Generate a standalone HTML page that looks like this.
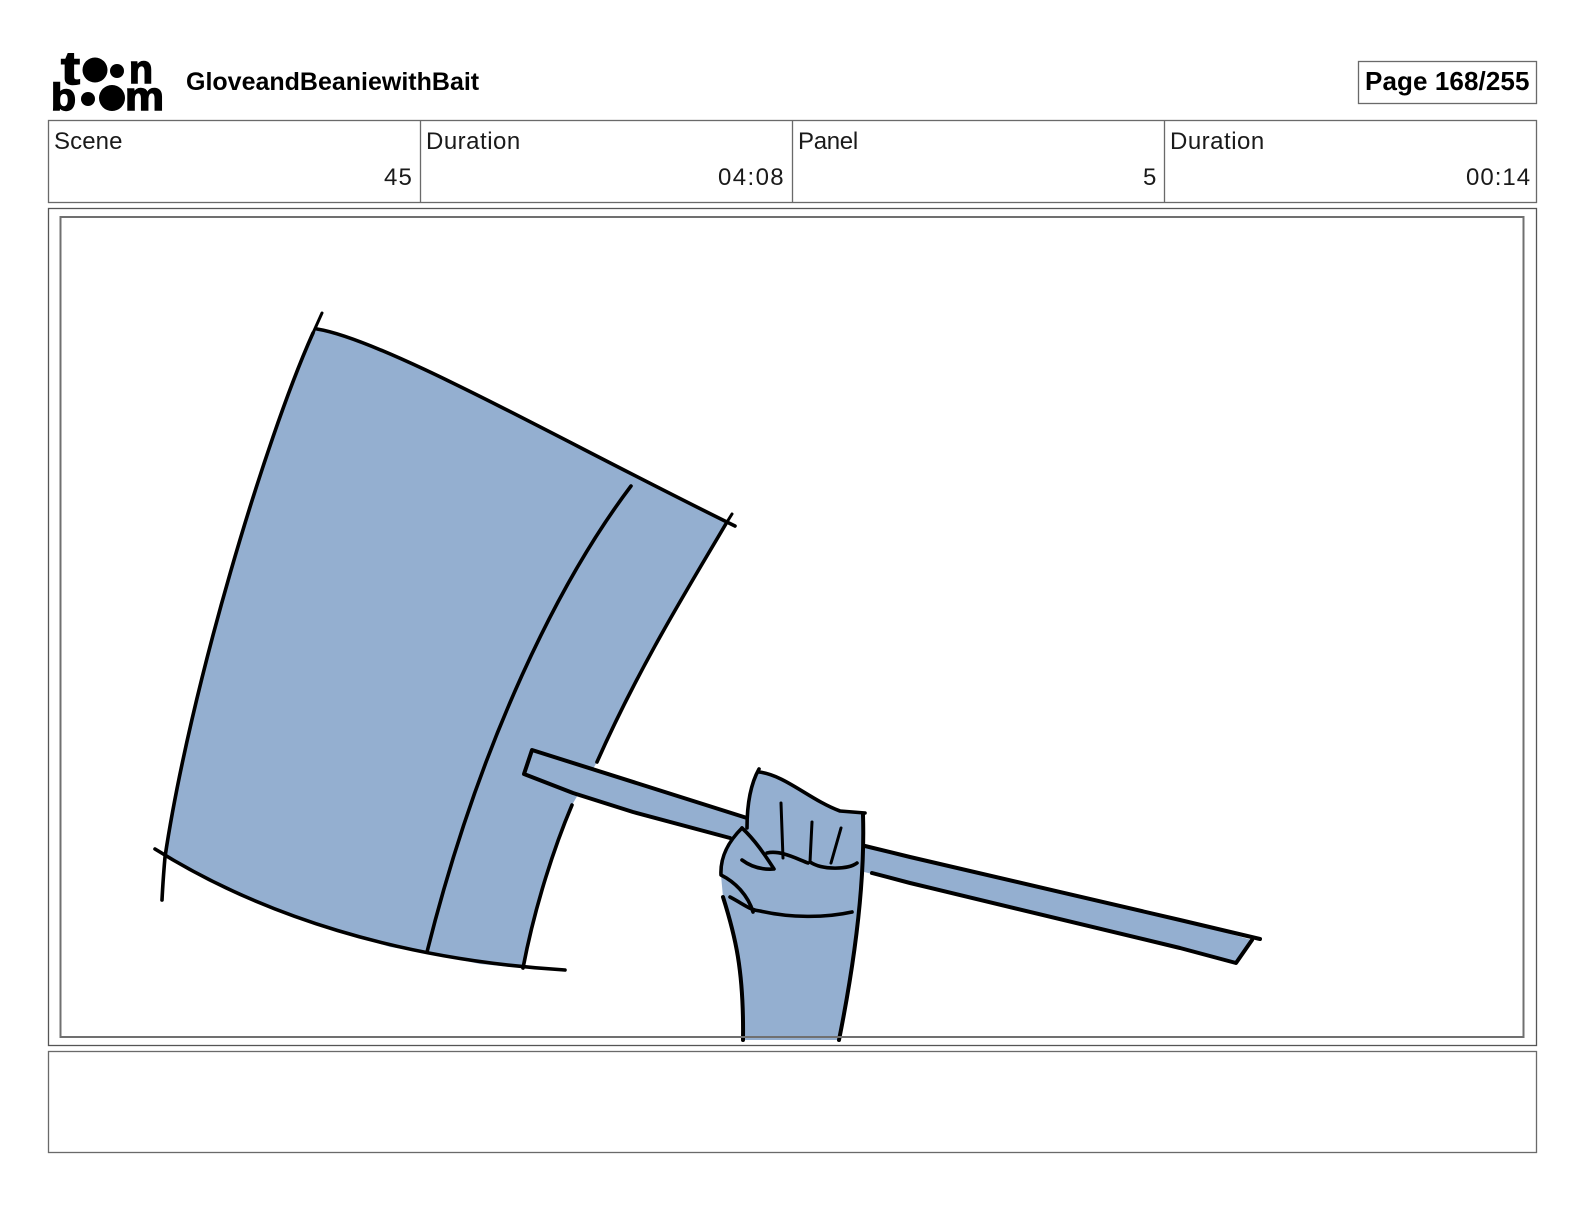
<!DOCTYPE html>
<html><head><meta charset="utf-8"><style>
html,body{margin:0;padding:0;background:#fff;}
body{width:1584px;height:1224px;position:relative;overflow:hidden;font-family:"Liberation Sans",sans-serif;}
svg{position:absolute;left:0;top:0;}
</style></head><body>
<svg width="1584" height="1224" viewBox="0 0 1584 1224" xmlns="http://www.w3.org/2000/svg">
<!-- logo -->
<g fill="#000" font-family="'Liberation Sans',sans-serif" font-weight="700" stroke="#000" stroke-width="1.4">
<text x="61" y="84" font-size="46" textLength="19" lengthAdjust="spacingAndGlyphs">t</text>
<text x="129" y="83" font-size="40" textLength="24" lengthAdjust="spacingAndGlyphs">n</text>
<text x="51" y="110" font-size="38" textLength="25" lengthAdjust="spacingAndGlyphs">b</text>
<text x="125" y="110" font-size="40" textLength="39" lengthAdjust="spacingAndGlyphs">m</text>
<circle cx="95" cy="70" r="12.5" stroke="none"/>
<circle cx="117" cy="71" r="7" stroke="none"/>
<circle cx="88" cy="99" r="7" stroke="none"/>
<circle cx="112" cy="98" r="13" stroke="none"/>
</g>
<!-- header text -->
<g fill="#000" font-family="'Liberation Sans',sans-serif">
<text x="186" y="90" font-size="25" font-weight="700">GloveandBeaniewithBait</text>
<text x="1365" y="90" font-size="26" font-weight="700" letter-spacing="0.1">Page 168/255</text>
<g font-size="24" fill="#1a1a1a">
<text x="54" y="149" letter-spacing="0.1">Scene</text>
<text x="426" y="149" letter-spacing="0.5">Duration</text>
<text x="798" y="149" letter-spacing="-0.3">Panel</text>
<text x="1170" y="149" letter-spacing="0.5">Duration</text>
<text x="384" y="185" letter-spacing="1.2">45</text>
<text x="718" y="185" letter-spacing="1.4">04:08</text>
<text x="1143" y="185">5</text>
<text x="1466" y="185" letter-spacing="1">00:14</text>
</g>
</g>
<!-- boxes -->
<g fill="none" stroke="#6a6a6a" stroke-width="1.3">
<rect x="1358.500" y="61.500" width="178" height="42"/>
<rect x="48.500" y="120.500" width="1488" height="82"/>
<path d="M420.500 120.500V202.500M792.500 120.500V202.500M1164.500 120.500V202.500"/>
<rect x="48.500" y="208.500" width="1488" height="837" stroke="#555"/>
<rect x="48.500" y="1051.500" width="1488" height="101"/>
</g>
<!-- fills -->
<g fill="#94afd0" stroke="none">
<path d="M313 333L317 329C385 340 560 440 735 526L727 522C690 585 640 665 597 762L572 805C555 845 535 905 523 968L480 964L427 953L390 947L330 928L273 907L210 882L165 857C190 690 265 440 313 333Z"/>
<path d="M532 750L747 818L750 845L730 838L633 812L573 793L524 774Z"/>
<path d="M860 846L910 857L1180 920L1252 940L1236 963L1180 948L910 883L860 871Z"/>
<path d="M759 771C785 775 810 800 840 811L865 813C865 880 855 960 839 1040L743 1040C744 970 735 935 723 897L721 875C720 855 730 840 742 828L748 825C747 805 750 785 759 771Z"/>
</g>
<!-- ink -->
<g fill="none" stroke="#000" stroke-width="3.600" stroke-linecap="round" stroke-linejoin="round">
<path stroke-width="3" d="M322 313L313 333"/>
<path d="M313 333C265 440 190 690 165 857Q163 880 162 900"/>
<path d="M317 329C385 340 560 440 735 526"/>
<path stroke-width="3" d="M732 514L727 522"/>
<path d="M727 522C690 585 640 665 597 762"/>
<path d="M572 805C555 845 535 905 523 968"/>
<path d="M155 849C260 915 400 960 565 970"/>
<path d="M631 486C560 580 480 740 427 952"/>
<path stroke-width="4" d="M747 818L532 750L524 774L573 793L633 812L730 838"/>
<path stroke-width="4" d="M865 846L910 857L1180 920L1260 939M1252 940L1236 963L1180 948L910 883L872 873"/>
<path d="M759 769C750 785 747 805 747 828"/>
<path d="M759 772C785 775 810 800 840 811L865 813"/>
<path stroke-width="4" d="M863 815C865 880 855 960 839 1040"/>
<path d="M742 828C730 840 720 855 721 875C735 882 748 895 753 912"/>
<path d="M742 828C755 840 765 855 774 869C760 870 750 866 742 860"/>
<path d="M767 853C780 850 795 858 808 863"/>
<path d="M810 862C822 870 848 870 857 863"/>
<path stroke-width="3" d="M781 803L783 858M812 822L810 862M841 828L831 863"/>
<path d="M730 897C745 905 750 910 760 911C790 918 825 918 852 912"/>
<path stroke-width="4" d="M723 897C735 935 744 970 743 1040"/>
</g>
<rect x="60.500" y="217" width="1463" height="820" fill="none" stroke="#707070" stroke-width="2"/>
</svg>
</body></html>
